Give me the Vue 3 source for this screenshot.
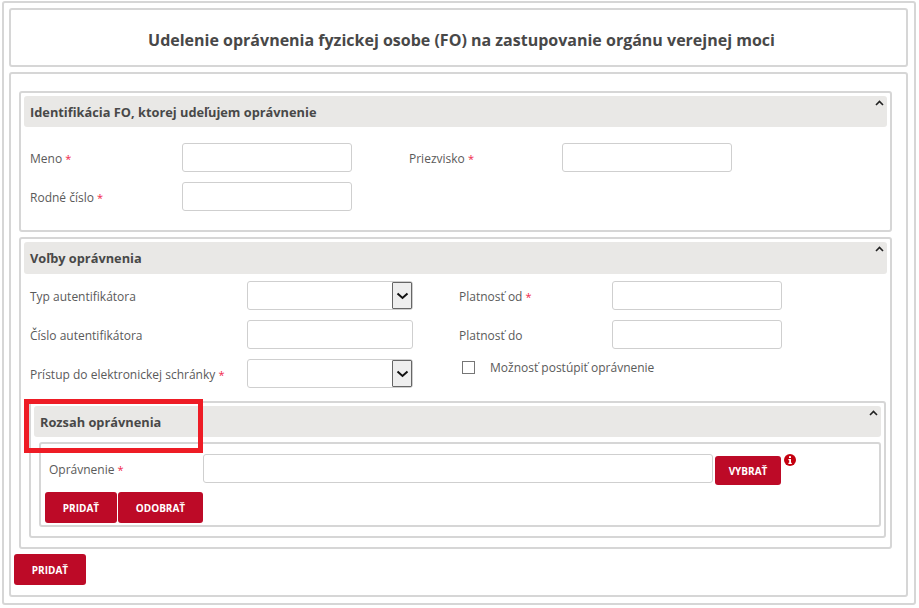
<template>
  <div class="page">
    <div class="frame title-box">
      <h1>Udelenie oprávnenia fyzickej osobe (FO) na zastupovanie orgánu verejnej moci</h1>
    </div>

    <div class="frame main-box">
      <section class="frame section first">
        <header class="sec-head">
          <span>Identifikácia FO, ktorej udeľujem oprávnenie</span>
          <svg class="chev" width="9" height="6" viewBox="0 0 9 6"><path d="M1 5 L4.5 1.5 L8 5" fill="none" stroke="#222" stroke-width="1.6" /></svg>
        </header>
        <div class="grid grid-id">
          <label>Meno <i>*</i></label>
          <input class="input" />
          <label class="l2">Priezvisko <i>*</i></label>
          <input class="input" />
          <label>Rodné číslo <i>*</i></label>
          <input class="input" />
        </div>
      </section>

      <section class="frame section second">
        <header class="sec-head">
          <span>Voľby oprávnenia</span>
          <svg class="chev" width="9" height="6" viewBox="0 0 9 6"><path d="M1 5 L4.5 1.5 L8 5" fill="none" stroke="#222" stroke-width="1.6" /></svg>
        </header>
        <div class="grid grid-opts">
          <label>Typ autentifikátora</label>
          <div class="input select">
            <span class="arrow"><svg width="13" height="8" viewBox="0 0 13 8"><path d="M1.5 1.5 L6.5 6 L11.500 1.500" fill="none" stroke="#111" stroke-width="2" /></svg></span>
          </div>
          <label class="l2">Platnosť od <i>*</i></label>
          <input class="input" />

          <label>Číslo autentifikátora</label>
          <input class="input" />
          <label class="l2">Platnosť do</label>
          <input class="input" />

          <label>Prístup do elektronickej schránky <i>*</i></label>
          <div class="input select">
            <span class="arrow"><svg width="13" height="8" viewBox="0 0 13 8"><path d="M1.5 1.5 L6.5 6 L11.500 1.500" fill="none" stroke="#111" stroke-width="2" /></svg></span>
          </div>
          <div class="check-row">
            <span class="check"></span>
            <span>Možnosť postúpiť oprávnenie</span>
          </div>
        </div>

        <section class="frame section third">
          <header class="sec-head">
            <span>Rozsah oprávnenia</span>
            <svg class="chev" width="9" height="6" viewBox="0 0 9 6"><path d="M1 5 L4.5 1.5 L8 5" fill="none" stroke="#222" stroke-width="1.6" /></svg>
          </header>
          <div class="frame scope">
            <div class="scope-row">
              <label>Oprávnenie <i>*</i></label>
              <input class="input wide" />
              <button class="btn pick">VYBRAŤ</button>
              <svg class="info" width="12" height="12" viewBox="0 0 12 12">
                <circle cx="6" cy="6" r="6" fill="#c4000f" />
                <rect x="5" y="2.200" width="2" height="1.800" fill="#fff" />
                <path d="M4.400 5 H7 V8.800 H7.800 V10 H4.400 V8.800 H5.200 V6.200 H4.400 Z" fill="#fff" />
              </svg>
            </div>
            <div class="scope-btns">
              <button class="btn">PRIDAŤ</button>
              <button class="btn remove">ODOBRAŤ</button>
            </div>
          </div>
        </section>
      </section>

      <button class="btn submit">PRIDAŤ</button>
    </div>

    <div class="callout"></div>
  </div>
</template>

<script setup>
</script>

<style>
html, body { background: #fff; }
</style>

<style scoped>
.page {
  position: relative;
  box-sizing: border-box;
  width: 914px;
  height: 604px;
  margin: 1px 0 0 2px;
  padding: 5px 6px 0 5px;
  border: 2px solid #d6d6d6;
  border-radius: 3px;
  font-family: "Open Sans", sans-serif;
  font-size: 12px;
  color: #5a5a5a;
}
.frame {
  box-sizing: border-box;
  border: 2px solid #d6d6d6;
  border-radius: 3px;
  background: #fff;
}
.title-box {
  height: 59px;
  padding: 4px 0 0 6px;
  display: flex;
  align-items: center;
  justify-content: center;
}
h1 {
  margin: 0;
  font-size: 16px;
  font-weight: 700;
  color: #484848;
}
.main-box {
  height: 525px;
  margin-top: 5px;
  padding: 17px 14px 0 8px;
}
.section { padding: 3px; }
.first { height: 141px; }
.second { height: 312px; margin-top: 5px; }
.third {
  height: 137px;
  margin: 13px 1px 0 5px;
}
.sec-head {
  position: relative;
  height: 31px;
  padding-left: 6px;
  display: flex;
  align-items: center;
  background: #e9e8e6;
  border-radius: 3px;
  font-size: 12.8px;
  font-weight: 700;
  color: #484848;
}
.second > .sec-head { height: 32px; }
.chev {
  position: absolute;
  right: 3px;
  top: 4px;
}
.grid {
  display: grid;
  padding-left: 6px;
  align-items: center;
}
.grid-id {
  grid-template-columns: 152px 170px 210px 170px;
  row-gap: 10px;
  padding-top: 16px;
}
.grid-id .l2 { padding-left: 57px; }
.grid-opts {
  grid-template-columns: 217px 166px 199px 170px;
  row-gap: 10px;
  padding-top: 7px;
}
.grid-opts .l2 { padding-left: 46px; }
label {
  white-space: nowrap;
  padding-top: 2px;
}
label i {
  font-style: normal;
  font-size: 11px;
  color: #f0264a;
}
.input {
  box-sizing: border-box;
  display: block;
  width: 100%;
  height: 29px;
  padding: 0;
  border: 1px solid #cfcfcf;
  border-radius: 3px;
  background: #fff;
  outline: none;
}
.select {
  display: flex;
  justify-content: flex-end;
}
.arrow {
  box-sizing: border-box;
  width: 20px;
  height: 27px;
  display: flex;
  align-items: center;
  justify-content: center;
  border: 1px solid #666;
  background: #eee;
  border-radius: 1px;
}
.check-row {
  grid-column: 3 / 5;
  align-self: start;
  display: flex;
  align-items: center;
  gap: 15px;
  padding-left: 49px;
}
.check {
  box-sizing: border-box;
  width: 13px;
  height: 13px;
  border: 1px solid #767676;
  background: #fff;
}
.scope {
  height: 85px;
  margin: 5px 0 0 5px;
  padding: 10px 0 0 4px;
}
.scope-row {
  display: flex;
  align-items: flex-start;
}
.scope-row label {
  box-sizing: border-box;
  width: 158px;
  padding: 0 0 0 4px;
  line-height: 31px;
}
.wide { width: 510px; flex: none; }
.btn {
  box-sizing: border-box;
  height: 31px;
  width: 72px;
  padding: 0;
  border: none;
  border-radius: 3px;
  background: #bd0a27;
  color: #fff;
  font-family: "Open Sans", sans-serif;
  font-size: 10px;
  font-weight: 700;
}
.pick {
  width: 66px;
  height: 29px;
  margin: 2px 0 0 2px;
}
.info { margin-left: 3px; }
.scope-btns {
  display: flex;
  gap: 1px;
  margin-top: 7px;
}
.remove { width: 85px; }
.submit {
  display: block;
  margin: 5px 0 0 -5px;
}
.callout {
  position: absolute;
  left: 20px;
  top: 396px;
  box-sizing: border-box;
  width: 179px;
  height: 54px;
  border: 5px solid #ee1c25;
}
</style>
